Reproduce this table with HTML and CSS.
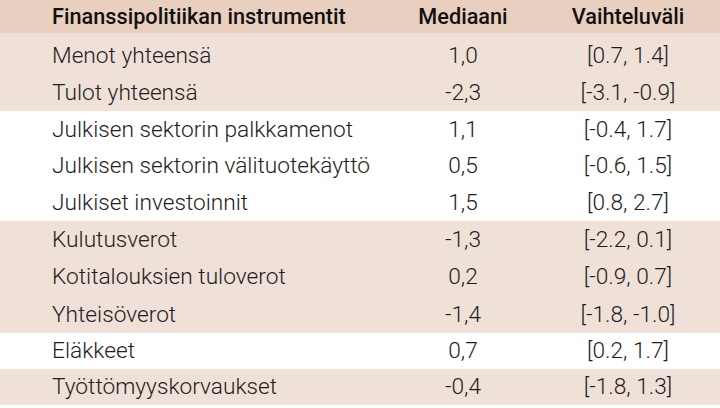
FILE: index.html
```html
<!DOCTYPE html>
<html lang="fi">
<head>
<meta charset="utf-8">
<title>Finanssipolitiikan instrumentit</title>
<link rel="stylesheet" href="styles.css">
</head>
<body>
<div class="table">
  <div class="row head">
    <div class="c1">Finanssipolitiikan instrumentit</div>
    <div class="c2">Mediaani</div>
    <div class="c3">Vaihteluväli</div>
  </div>
  <div class="group tint first">
    <div class="row r37"><div class="c1">Menot yhteensä</div><div class="c2">1,0</div><div class="c3">[0.7, 1.4]</div></div>
    <div class="row r37"><div class="c1">Tulot yhteensä</div><div class="c2">-2,3</div><div class="c3">[-3.1, -0.9]</div></div>
  </div>
  <div class="group plain">
    <div class="row r36"><div class="c1">Julkisen sektorin palkkamenot</div><div class="c2">1,1</div><div class="c3">[-0.4, 1.7]</div></div>
    <div class="row r36"><div class="c1">Julkisen sektorin välituotekäyttö</div><div class="c2">0,5</div><div class="c3">[-0.6, 1.5]</div></div>
    <div class="row r36"><div class="c1">Julkiset investoinnit</div><div class="c2">1,5</div><div class="c3">[0.8, 2.7]</div></div>
  </div>
  <div class="group tint">
    <div class="row r37b"><div class="c1">Kulutusverot</div><div class="c2">-1,3</div><div class="c3">[-2.2, 0.1]</div></div>
    <div class="row r37b"><div class="c1">Kotitalouksien tuloverot</div><div class="c2">0,2</div><div class="c3">[-0.9, 0.7]</div></div>
    <div class="row r37b"><div class="c1">Yhteisöverot</div><div class="c2">-1,4</div><div class="c3">[-1.8, -1.0]</div></div>
  </div>
  <div class="group plain">
    <div class="row r36s"><div class="c1">Eläkkeet</div><div class="c2">0,7</div><div class="c3">[0.2, 1.7]</div></div>
  </div>
  <div class="group tint">
    <div class="row r36s"><div class="c1">Työttömyyskorvaukset</div><div class="c2">-0,4</div><div class="c3">[-1.8, 1.3]</div></div>
  </div>
</div>
</body>
</html>
```

FILE: styles.css
```css
html, body {
  margin: 0;
  padding: 0;
  background: #ffffff;
}

body {
  font-family: Roboto, "Liberation Sans", sans-serif;
  color: #231c1c;
}

.table {
  width: 720px;
}

.row {
  display: grid;
  grid-template-columns: 390px 146px 184px;
  align-items: center;
  font-size: 22.7px;
  font-weight: 300;
}

.c1 {
  padding-left: 52px;
  white-space: nowrap;
}

.c2, .c3 {
  text-align: center;
  white-space: nowrap;
}

.head {
  height: 33px;
  background: #e9cfbf;
  font-weight: 500;
  font-size: 21.7px;
  color: #141010;
}

.tint {
  background: #efe1d8;
}

.plain {
  background: #ffffff;
}

.first {
  padding-top: 4px;
}

.r37 { height: 37px; }
.r36 { height: 36.67px; }
.r37b { height: 37.33px; }
.r36s { height: 36px; }
```
